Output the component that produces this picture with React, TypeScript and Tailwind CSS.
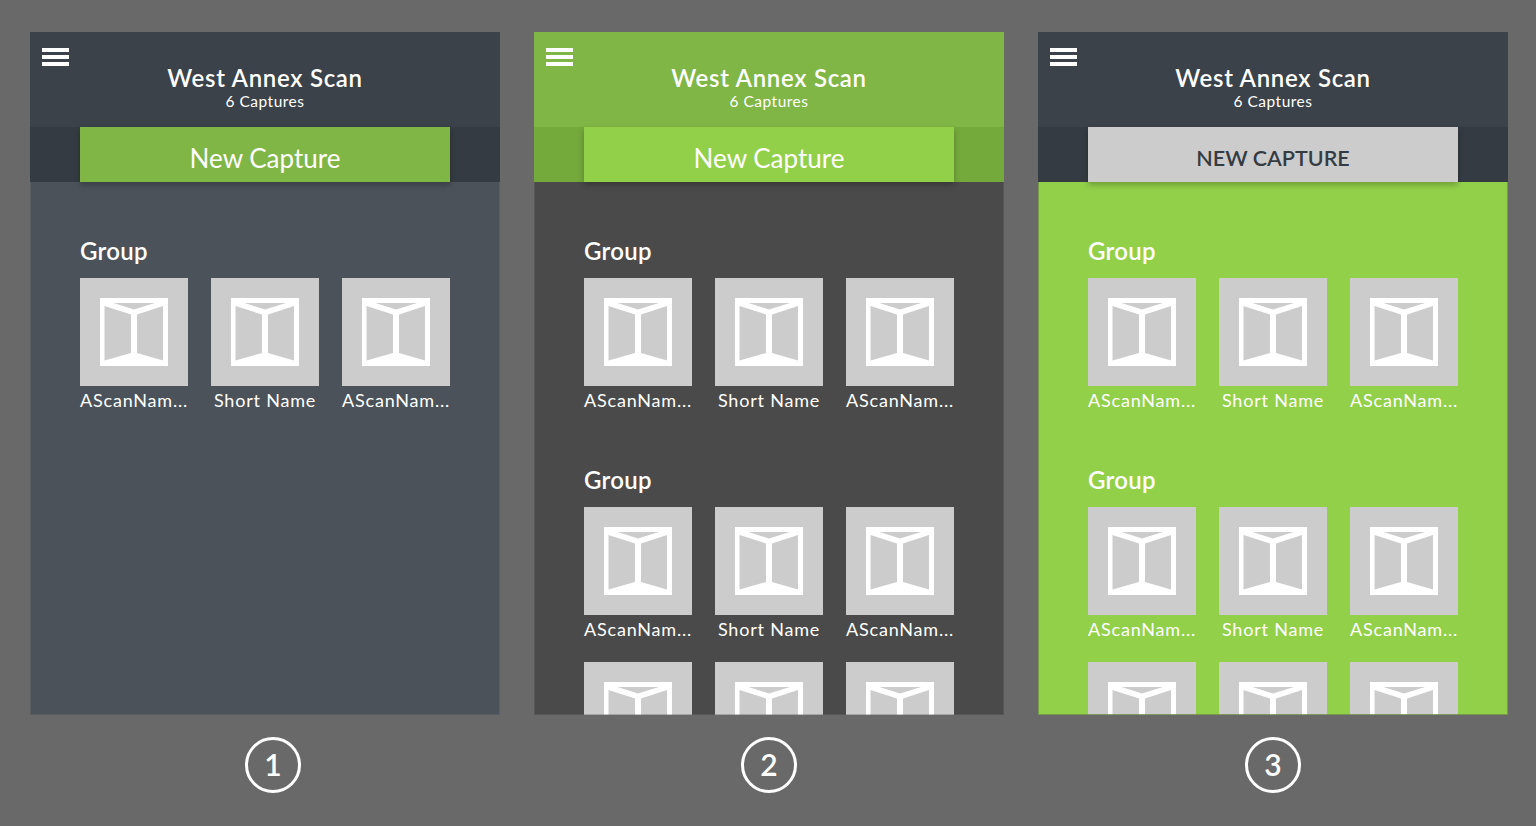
const scanIcon = 'M0 0H68V68H0Z M13.5 5L55 5L34 11.5Z M4.5 8L31 16.5V55L4.5 62.5Z M37 16.5L63 8V62.5L37 55Z';

const themes = {
  slate: {
    frame: 'outline-[#696969]/50',
    header: 'bg-[#3b4249]',
    strip: 'bg-[#343b42]',
    button: 'bg-[#80b645] pt-[7px] text-white text-[26px]',
    body: 'bg-[#4b5259]',
    label: 'New Capture',
  },
  green: {
    frame: 'outline-[#696969]/40',
    header: 'bg-[#80b645]',
    strip: 'bg-[#74a93c]',
    button: 'bg-[#93d04a] pt-[7px] text-white text-[26px]',
    body: 'bg-[#4a4a4a]',
    label: 'New Capture',
  },
  inverse: {
    frame: 'outline-[#6e8c46]/80',
    header: 'bg-[#3b4249]',
    strip: 'bg-[#343b42]',
    button: 'bg-[#cccccc] pt-[7px] text-[#343b42] text-[21.5px] font-semibold',
    body: 'bg-[#93d04a]',
    label: 'NEW CAPTURE',
  },
};

type ThemeName = keyof typeof themes;

const Tile = ({ name }: { name?: string }) => (
  <div className="w-[108px]">
    <div className="flex h-[108px] w-[108px] items-center justify-center bg-[#cccccc]">
      <svg width="68" height="68" viewBox="0 0 68 68">
        <path d={scanIcon} fill="#ffffff" fillRule="evenodd" />
      </svg>
    </div>
    {name && <div className="mt-[3px] text-center text-[18px] leading-[22px] tracking-[0.8px] whitespace-nowrap text-white">{name}</div>}
  </div>
);

// rows cut off by the bottom of the panel never get as far as their names
const TileRow = ({ named }: { named: boolean }) => (
  <div className="flex justify-between">
    <Tile name={named ? 'AScanNam...' : undefined} />
    <Tile name={named ? 'Short Name' : undefined} />
    <Tile name={named ? 'AScanNam...' : undefined} />
  </div>
);

const Group = ({ rows, cutOff }: { rows: number; cutOff?: boolean }) => (
  <div className="mb-[53px]">
    <h2 className="mb-[11px] text-[24px] leading-[32px] font-semibold tracking-[0.3px] text-white">Group</h2>
    <div className="flex flex-col gap-[22px]">
      {Array.from({ length: rows }, (_, i) => (
        <TileRow key={i} named={!(cutOff && i === rows - 1)} />
      ))}
    </div>
  </div>
);

const Phone = ({ theme, groups }: { theme: ThemeName; groups: number[] }) => {
  const t = themes[theme];
  return (
    <div className={`isolate flex h-[683px] w-[470px] flex-col overflow-hidden outline-1 -outline-offset-1 ${t.frame}`}>
      <header className={`relative h-[95px] shrink-0 ${t.header}`}>
        <div className="absolute top-[16px] left-[12px] flex w-[27px] flex-col gap-[3px]">
          <span className="h-[4px] bg-white" />
          <span className="h-[4px] bg-white" />
          <span className="h-[4px] bg-white" />
        </div>
        <div className="pt-[31px] text-center text-white">
          <h1 className="text-[24px] leading-[30px] font-semibold tracking-[0.7px]">West Annex Scan</h1>
          <p className="-mt-[1px] text-[15.5px] leading-[18px] tracking-[0.5px]">6 Captures</p>
        </div>
      </header>
      <div className={`relative z-10 h-[55px] shrink-0 px-[50px] ${t.strip}`}>
        <button className={`h-[55px] w-full shadow-[0_3px_6px_rgba(0,0,0,0.25)] ${t.button}`}>{t.label}</button>
      </div>
      <main className={`flex-1 overflow-hidden px-[50px] pt-[53px] ${t.body}`}>
        {groups.map((rows, i) => (
          <Group key={i} rows={rows} cutOff={rows > 1} />
        ))}
      </main>
    </div>
  );
};

const Step = ({ n, className }: { n: number; className: string }) => (
  <div className={`flex h-[56px] w-[56px] items-center justify-center rounded-full border-[3px] border-white pb-[2px] text-[30px] font-semibold text-white ${className}`}>
    {n}
  </div>
);

export default function App() {
  return (
    <div className="h-[826px] w-[1536px] overflow-hidden bg-[#696969] pt-[32px] pl-[30px] font-['Lato',sans-serif]">
      <div className="flex gap-[34px]">
        <Phone theme="slate" groups={[1]} />
        <Phone theme="green" groups={[1, 2]} />
        <Phone theme="inverse" groups={[1, 2]} />
      </div>
      <div className="mt-[22px] flex gap-[34px]">
        <div className="flex w-[470px] justify-center"><Step n={1} className="ml-[16px]" /></div>
        <div className="flex w-[470px] justify-center"><Step n={2} className="" /></div>
        <div className="flex w-[470px] justify-center"><Step n={3} className="" /></div>
      </div>
    </div>
  );
}
